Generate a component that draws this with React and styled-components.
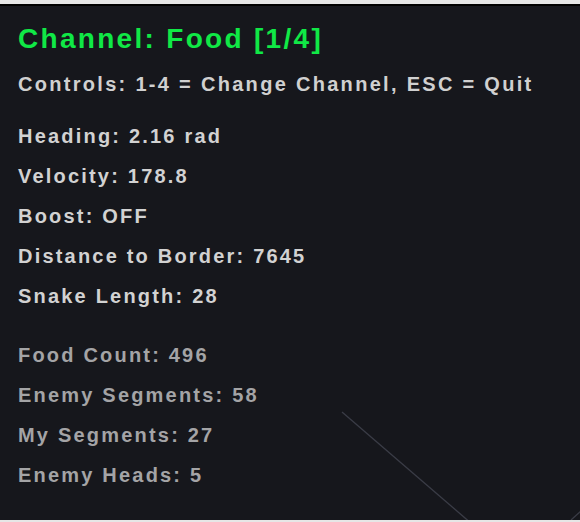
import React from "react";
import styled, { createGlobalStyle } from "styled-components";

const GlobalStyle = createGlobalStyle`
  html, body {
    margin: 0;
    padding: 0;
    background: #e6e6e6;
  }
  body {
    font-family: "Liberation Sans", Arial, sans-serif;
  }
`;

//스타일
const Frame = styled.div`
  position: relative;
  margin-top: 4px;
  height: 516px;
  border-top: 2px solid #000;
  background: #16171c;
  padding: 18px 0 0 18px;
  box-sizing: border-box;
  overflow: hidden;
`;

const Title = styled.h1`
  margin: 0;
  font-size: 28px;
  line-height: 30px;
  font-weight: bold;
  letter-spacing: 2.3px;
  color: #10e846;
`;

const Controls = styled.div`
  margin-top: 18px;
  font-size: 20px;
  line-height: 24px;
  font-weight: bold;
  letter-spacing: 2.3px;
  color: #d0d0d0;
`;

const Group = styled.div`
  display: flex;
  flex-direction: column;
  margin-top: ${(p) => p.gap}px;
`;

const Stat = styled.div`
  font-size: 20px;
  line-height: 40px;
  font-weight: bold;
  letter-spacing: 2.2px;
  color: ${(p) => (p.dim ? "#a4a4a6" : "#d2d2d2")};
`;

const Canvas = styled.svg`
  position: absolute;
  left: 0;
  top: 0;
  pointer-events: none;
`;

const player = [
  "Heading: 2.16 rad",
  "Velocity: 178.8",
  "Boost: OFF",
  "Distance to Border: 7645",
  "Snake Length: 28",
];

const world = [
  "Food Count: 496",
  "Enemy Segments: 58",
  "My Segments: 27",
  "Enemy Heads: 5",
];

function App() {
  return (
    <>
      <GlobalStyle />
      <Frame>
        <Canvas width="580" height="516">
          <line x1="342" y1="406" x2="472" y2="518" stroke="#3a3c46" strokeWidth="1.3" />
          <line x1="571" y1="514" x2="582" y2="504" stroke="#3a3c46" strokeWidth="1.3" />
        </Canvas>
        <Title>Channel: Food [1/4]</Title>
        <Controls>Controls: 1-4 = Change Channel, ESC = Quit</Controls>
        <Group gap={20}>
          {player.map((t) => (
            <Stat key={t}>{t}</Stat>
          ))}
        </Group>
        <Group gap={19}>
          {world.map((t) => (
            <Stat key={t} dim>
              {t}
            </Stat>
          ))}
        </Group>
      </Frame>
    </>
  );
}

export default App;
